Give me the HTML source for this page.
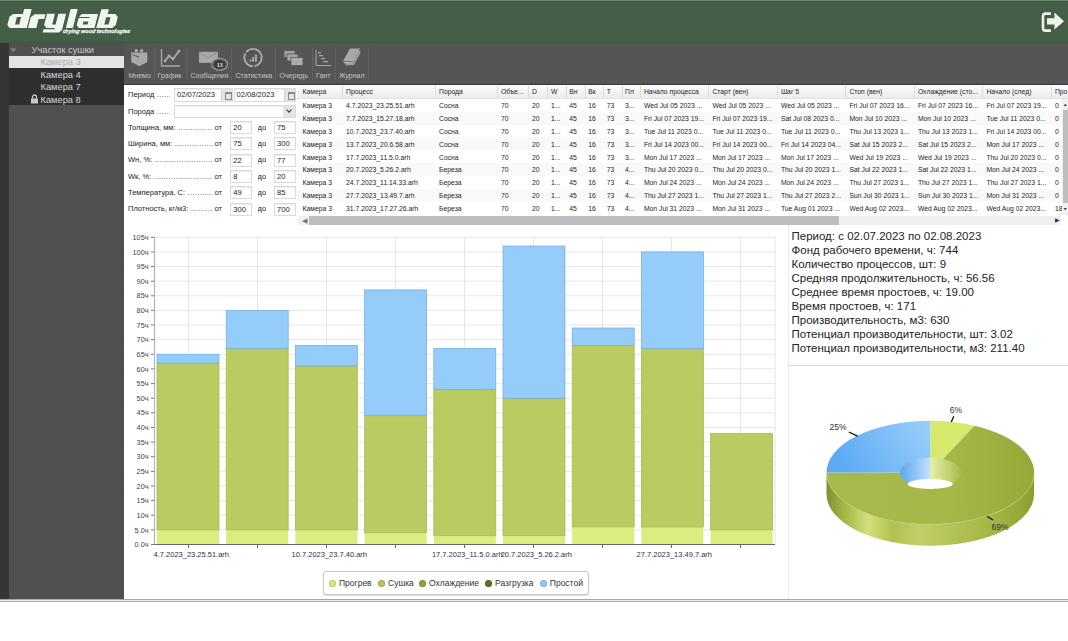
<!DOCTYPE html>
<html><head><meta charset="utf-8">
<style>
*{box-sizing:border-box;margin:0;padding:0}
html,body{width:1068px;height:641px;overflow:hidden;background:#fff;font-family:"Liberation Sans",sans-serif;position:relative}
.abs{position:absolute}
#hdr{left:0;top:0;width:1068px;height:43.5px;background:#445e47;border-top:1px solid #6d8a70;border-bottom:2px solid #3f5642;box-shadow:inset 0 1px 0 #3e5640}
#logo{left:7px;top:5.8px;color:#f2f7ee;font-weight:bold;font-style:italic;font-size:23.5px;line-height:26px;transform-origin:0 0;transform:scaleX(1.6);letter-spacing:-0.3px;-webkit-text-stroke:1.6px #f2f7ee}
#tag{left:62.5px;top:28.3px;color:#eef4ea;font-weight:bold;font-style:italic;font-size:5.45px;line-height:6px;letter-spacing:0px;-webkit-text-stroke:0.25px #eef4ea;transform:skewX(-8deg)}
#strip{left:0;top:43px;width:9px;height:556px;background:#353535}
#side{left:9px;top:43px;width:115px;height:556px;background:#505050}
#toolbar{left:124px;top:43px;width:944px;height:42px;background:#555555;border-bottom:1.5px solid #393939}
#app-bottom{left:0;top:599px;width:1068px;height:3px;border-top:1px solid #a9a9a9;border-bottom:1px solid #a9a9a9;background:#ececec}
#form{left:124px;top:85px;width:174px;height:140px;background:#fff}
#grid{left:298px;top:85px;width:770px;height:140px;background:#fff}
#chart{left:124px;top:225px;width:664px;height:374px;background:#fff}
#stats{left:788px;top:225px;width:280px;height:141px;background:#fff;border-left:1px solid #ececec;border-bottom:1px solid #d8d8d8}
#pie{left:788px;top:366px;width:280px;height:233px;background:#fff;border-left:1px solid #ececec}
.st{font-size:9.3px;line-height:12px;white-space:nowrap}
.tl{position:absolute;top:72px;font-size:7px;line-height:8px;color:#c4c4c4;white-space:nowrap}
.sep{position:absolute;top:47px;width:1px;height:33px;background:#626262}
.fl{position:absolute;font-size:7.5px;line-height:10px;color:#222;white-space:nowrap;display:flex;overflow:hidden}
.fl .dots{flex:1;overflow:hidden;letter-spacing:0.35px;margin-left:2.5px;color:#333}
.fl i{font-style:normal;margin-left:2px}
.inp{position:absolute;border:1px solid #dadada;background:#fff;box-shadow:inset 0 1px 1px #eee}
.inp span{position:absolute;top:1px;font-size:7.6px;line-height:10px;color:#1e1e1e;white-space:nowrap}
.cal{position:absolute;right:0;top:0;width:11px;height:100%;background:#e4e4e4;border-left:1px solid #d0d0d0}
.cal:after{content:"";position:absolute;left:2.5px;top:3px;width:5px;height:5px;border:1px solid #888;border-top-width:2px}
.dd{position:absolute;right:0;top:0;width:12px;height:100%;background:#e4e4e4}
.dd:after{content:"";position:absolute;left:3.5px;top:2.5px;width:3px;height:3px;border-right:1.3px solid #333;border-bottom:1.3px solid #333;transform:rotate(45deg)}
.gc{position:absolute;font-size:6.8px;line-height:9px;color:#1e1e1e;white-space:nowrap}
.yl{font-size:7.3px;fill:#444;font-family:"Liberation Sans",sans-serif}
.xl{font-size:7.5px;fill:#333;font-family:"Liberation Sans",sans-serif}
.lg{font-size:8.5px;line-height:11px;color:#333;white-space:nowrap}
.sl{font-size:11.5px;line-height:14px;color:#222;white-space:nowrap}
.pl{font-size:8.5px;fill:#333;font-family:"Liberation Sans",sans-serif}
</style></head><body>
<div id="hdr" class="abs"></div>
<svg class="abs" style="left:1036px;top:8px" width="32" height="28">
<path d="M14.9 5.6 H9.5 Q7 5.6 7 8.2 V20 Q7 22.6 9.5 22.6 H14.9" stroke="#eef4ea" stroke-width="2.6" fill="none"/>
<path d="M11 10.3 H18.4 V4.5 L28 13.2 L18.4 21.6 V16.6 H11 Z" fill="#eef4ea"/>
</svg>
<svg class="abs" style="left:0;top:0" width="140" height="42"><g transform="matrix(1 0 -0.256 1 7.168 0)"><path d="M9.40 14.00 L19.30 14.00 L19.30 9.10 L26.80 9.10 L26.80 28.00 L9.60 28.00 L6.60 25.00 L6.60 16.80 ZM14.10 17.00 L14.10 24.50 L18.30 24.50 L18.30 17.00 ZM31.00 14.20 L42.00 14.20 L42.00 18.90 L36.30 18.90 L36.30 28.00 L28.00 28.00 L28.00 17.20 ZM43.40 13.80 L51.30 13.80 L51.30 24.50 L54.70 24.50 L54.70 13.80 L62.50 13.80 L62.50 30.00 L60.10 32.40 L43.80 32.40 L43.80 29.30 L54.70 29.30 L54.70 28.00 L46.40 28.00 L43.40 25.00 ZM65.80 9.10 L72.90 9.10 L72.90 28.00 L65.80 28.00 ZM78.50 14.00 L94.50 14.00 L94.50 28.00 L78.80 28.00 L76.00 25.20 L76.00 18.10 L86.80 18.10 L86.80 17.00 L76.50 17.00 L76.50 16.00 ZM81.80 21.50 L81.80 24.50 L86.70 24.50 L86.70 21.50 ZM96.60 9.20 L104.10 9.20 L104.10 14.10 L112.00 14.10 L115.00 17.10 L115.00 25.00 L112.20 28.00 L96.20 28.00 ZM103.40 17.20 L103.40 24.50 L107.70 24.50 L107.70 17.20 Z" fill="#f1f6ee" fill-rule="evenodd"/></g></svg>
<div id="tag" class="abs">drying wood technologies</div>
<div id="strip" class="abs"></div>
<div id="side" class="abs"></div>
<div id="toolbar" class="abs"></div>
<div class="abs" style="left:9px;top:55.5px;width:115px;height:12.5px;background:#e3e3e3"></div>
<div class="abs" style="left:9px;top:68px;width:115px;height:37px;background:#2e2e2e"></div>
<svg class="abs" style="left:8px;top:46px" width="10" height="8"><path d="M1.8 2.3 L8.6 2.3 L5.2 6.2 Z" fill="#7c7c7c"/></svg>
<div class="abs st" style="left:31.5px;top:43.8px;color:#c9c9c9">Участок сушки</div>
<div class="abs st" style="left:40.5px;top:56px;color:#ababab">Камера 3</div>
<div class="abs st" style="left:40.5px;top:68.8px;color:#d6d6d6">Камера 4</div>
<div class="abs st" style="left:40.5px;top:81.2px;color:#d6d6d6">Камера 7</div>
<div class="abs st" style="left:40.5px;top:93.8px;color:#d6d6d6">Камера 8</div>
<svg class="abs" style="left:30px;top:94px" width="9" height="10"><path d="M2.5 4.5 V3 A2 2 0 0 1 6.5 3 V4.5" stroke="#c8c8c8" stroke-width="1.3" fill="none"/><rect x="1" y="4.5" width="7" height="5" fill="#c8c8c8"/></svg>

<div class="tl" style="left:128.5px">Мнемо</div>
<div class="tl" style="left:157.5px">График</div>
<div class="tl" style="left:190.5px">Сообщения</div>
<div class="tl" style="left:235.5px">Статистика</div>
<div class="tl" style="left:279.5px">Очередь</div>
<div class="tl" style="left:316px">Гант</div>
<div class="tl" style="left:339px">Журнал</div>
<div class="sep" style="left:154px"></div>
<div class="sep" style="left:186px"></div>
<div class="sep" style="left:231px"></div>
<div class="sep" style="left:275px"></div>
<div class="sep" style="left:311.5px"></div>
<div class="sep" style="left:334.5px"></div>
<div class="sep" style="left:368px"></div>
<svg class="abs" style="left:124px;top:43px" width="250" height="30">
 <g fill="#a9a9a9" stroke="none">
  <!-- mnemo box -->
  <path d="M7.2 9.4 L23.3 9.4 L23.3 19 L15.4 23.3 L7.2 19 Z"/>
  <path d="M8.5 11.6 L15 14.2" stroke="#6e6e6e" stroke-width="1.3" fill="none"/>
  <circle cx="12.3" cy="7.6" r="1.7"/><circle cx="17.6" cy="7.6" r="1.7"/>
  <!-- grafik -->
  <path d="M37.5 6 V23 H56" stroke="#a9a9a9" stroke-width="1.3" fill="none"/>
  <path d="M41 18 L45 13 L49 16 L55 8" stroke="#a9a9a9" stroke-width="2" fill="none" stroke-linejoin="round"/>
  <circle cx="41" cy="18" r="1.4"/><circle cx="45" cy="13" r="1.4"/><circle cx="49" cy="16" r="1.4"/><circle cx="55" cy="8" r="1.4"/>
  <!-- envelope -->
  <rect x="75" y="8.8" width="19" height="11" fill="#a9a9a9"/>
  <path d="M75 9 L84.5 15 L94 9" stroke="#8c8c8c" stroke-width="0.8" fill="none"/>
  <ellipse cx="95.7" cy="21.3" rx="8" ry="6" fill="#555" stroke="#9a9a9a" stroke-width="1.2"/>
  <ellipse cx="95.7" cy="21.3" rx="5.5" ry="4" fill="#3b3b3b"/>
  <text x="95.7" y="23.5" font-family="Liberation Serif" font-weight="bold" font-size="6" fill="#eee" text-anchor="middle">13</text>
  <!-- stat ring -->
  <circle cx="129" cy="14.6" r="8.7" stroke="#a9a9a9" stroke-width="1.9" fill="none" stroke-dasharray="12 1.5 18 1.5 22 1.5"/>
  <rect x="125.5" y="16.5" width="2" height="2.2"/><rect x="128.2" y="14" width="2" height="4.7"/><rect x="130.9" y="11.5" width="2" height="7.2"/>
  <!-- queue -->
  <rect x="160" y="7.5" width="11" height="7" fill="#a0a0a0" stroke="#555" stroke-width="0.8"/>
  <rect x="163" y="11" width="11" height="7" fill="#a6a6a6" stroke="#555" stroke-width="0.8"/>
  <rect x="167" y="14.5" width="12" height="8" fill="#acacac" stroke="#555" stroke-width="0.8"/>
  <!-- gantt -->
  <path d="M192 7 V22.5 H207" stroke="#a9a9a9" stroke-width="1" fill="none"/>
  <rect x="194" y="9" width="3" height="1.2"/><rect x="195" y="12" width="4" height="1.2"/><rect x="197" y="15" width="4" height="1.2"/><rect x="199" y="18" width="5" height="1.2"/>
  <!-- book -->
  <path d="M219 18 L226 5.5 L236 5.5 L229 18.5 Z"/>
  <path d="M219 18.5 L222 22.5 L230 22 L236.5 10 L236 7 L229.5 19.5 Z" fill="#9a9a9a"/>
  <path d="M221 19.5 L228.5 20 L235.5 8" stroke="#ddd" stroke-width="0.6" fill="none"/>
 </g>
</svg>

<div id="form" class="abs"></div>

<div class="fl" style="left:128px;top:90.3px;width:42px">Период<span class="dots">..........................</span></div>
<div class="fl" style="left:128px;top:106.5px;width:42px">Порода<span class="dots">..........................</span></div>
<div class="inp" style="left:174px;top:88px;width:59px;height:13.5px"><span style="left:2px">02/07/2023</span><b class="cal"></b></div>
<div class="inp" style="left:233.5px;top:88px;width:62.5px;height:13.5px"><span style="left:2px">02/08/2023</span><b class="cal"></b></div>
<div class="inp" style="left:174px;top:104.5px;width:122px;height:13px"><b class="dd"></b></div>
<div class="fl" style="left:128px;top:122.6px;width:94px">Толщина, мм:<span class="dots">......................................................</span><i>от</i></div>
<div class="inp" style="left:230.3px;top:121.0px;width:22px;height:13px"><span style="left:2px">20</span></div>
<div class="fl" style="left:257.5px;top:122.6px">до</div>
<div class="inp" style="left:274px;top:121.0px;width:22px;height:13px"><span style="left:2px">75</span></div>
<div class="fl" style="left:128px;top:139.0px;width:94px">Ширина, мм:<span class="dots">......................................................</span><i>от</i></div>
<div class="inp" style="left:230.3px;top:137.4px;width:22px;height:13px"><span style="left:2px">75</span></div>
<div class="fl" style="left:257.5px;top:139.0px">до</div>
<div class="inp" style="left:274px;top:137.4px;width:22px;height:13px"><span style="left:2px">300</span></div>
<div class="fl" style="left:128px;top:155.4px;width:94px">Wн, %:<span class="dots">......................................................</span><i>от</i></div>
<div class="inp" style="left:230.3px;top:153.8px;width:22px;height:13px"><span style="left:2px">22</span></div>
<div class="fl" style="left:257.5px;top:155.4px">до</div>
<div class="inp" style="left:274px;top:153.8px;width:22px;height:13px"><span style="left:2px">77</span></div>
<div class="fl" style="left:128px;top:171.7px;width:94px">Wк, %:<span class="dots">......................................................</span><i>от</i></div>
<div class="inp" style="left:230.3px;top:170.1px;width:22px;height:13px"><span style="left:2px">8</span></div>
<div class="fl" style="left:257.5px;top:171.7px">до</div>
<div class="inp" style="left:274px;top:170.1px;width:22px;height:13px"><span style="left:2px">20</span></div>
<div class="fl" style="left:128px;top:188.0px;width:94px">Температура, С:<span class="dots">......................................................</span><i>от</i></div>
<div class="inp" style="left:230.3px;top:186.4px;width:22px;height:13px"><span style="left:2px">49</span></div>
<div class="fl" style="left:257.5px;top:188.0px">до</div>
<div class="inp" style="left:274px;top:186.4px;width:22px;height:13px"><span style="left:2px">85</span></div>
<div class="fl" style="left:128px;top:204.3px;width:94px">Плотность, кг/м3:<span class="dots">......................................................</span><i>от</i></div>
<div class="inp" style="left:230.3px;top:202.7px;width:22px;height:13px"><span style="left:2px">300</span></div>
<div class="fl" style="left:257.5px;top:204.3px">до</div>
<div class="inp" style="left:274px;top:202.7px;width:22px;height:13px"><span style="left:2px">700</span></div>
<div class="abs" style="left:297px;top:85px;width:771px;height:140px;background:#fff;overflow:hidden">
<div class="abs" style="left:0;top:0;width:771px;height:14px;background:linear-gradient(#fbfbfb,#ececec);border-bottom:1px solid #e2e2e2"></div>
<div class="gc" style="left:5.5px;top:2px;width:41.4px">Камера</div>
<div class="abs" style="left:44.9px;top:1px;width:1px;height:12px;background:#dcdcdc"></div><div class="gc" style="left:49.1px;top:2px;width:88.9px">Процесс</div>
<div class="abs" style="left:137.8px;top:1px;width:1px;height:12px;background:#dcdcdc"></div><div class="gc" style="left:142.0px;top:2px;width:57.9px">Порода</div>
<div class="abs" style="left:199.7px;top:1px;width:1px;height:12px;background:#dcdcdc"></div><div class="gc" style="left:203.9px;top:2px;width:27.0px">Объе...</div>
<div class="abs" style="left:230.7px;top:1px;width:1px;height:12px;background:#dcdcdc"></div><div class="gc" style="left:234.9px;top:2px;width:15.1px">D</div>
<div class="abs" style="left:249.8px;top:1px;width:1px;height:12px;background:#dcdcdc"></div><div class="gc" style="left:254.0px;top:2px;width:15.1px">W</div>
<div class="abs" style="left:268.9px;top:1px;width:1px;height:12px;background:#dcdcdc"></div><div class="gc" style="left:272.2px;top:2px;width:15.1px">Вн</div>
<div class="abs" style="left:288.0px;top:1px;width:1px;height:12px;background:#dcdcdc"></div><div class="gc" style="left:291.3px;top:2px;width:14.4px">Вк</div>
<div class="abs" style="left:306.4px;top:1px;width:1px;height:12px;background:#dcdcdc"></div><div class="gc" style="left:309.7px;top:2px;width:14.3px">T</div>
<div class="abs" style="left:324.7px;top:1px;width:1px;height:12px;background:#dcdcdc"></div><div class="gc" style="left:328.0px;top:2px;width:13.8px">Пл</div>
<div class="abs" style="left:342.5px;top:1px;width:1px;height:12px;background:#dcdcdc"></div><div class="gc" style="left:346.9px;top:2px;width:64.5px">Начало процесса</div>
<div class="abs" style="left:411.0px;top:1px;width:1px;height:12px;background:#dcdcdc"></div><div class="gc" style="left:415.4px;top:2px;width:64.5px">Старт (вен)</div>
<div class="abs" style="left:479.5px;top:1px;width:1px;height:12px;background:#dcdcdc"></div><div class="gc" style="left:483.9px;top:2px;width:64.5px">Шаг 5</div>
<div class="abs" style="left:548.0px;top:1px;width:1px;height:12px;background:#dcdcdc"></div><div class="gc" style="left:552.4px;top:2px;width:64.5px">Стоп (вен)</div>
<div class="abs" style="left:616.5px;top:1px;width:1px;height:12px;background:#dcdcdc"></div><div class="gc" style="left:620.9px;top:2px;width:64.5px">Охлаждение (сто...</div>
<div class="abs" style="left:685.0px;top:1px;width:1px;height:12px;background:#dcdcdc"></div><div class="gc" style="left:689.4px;top:2px;width:64.5px">Начало (след)</div>
<div class="abs" style="left:753.5px;top:1px;width:1px;height:12px;background:#dcdcdc"></div><div class="gc" style="left:757.9px;top:2px;width:45.0px">Про</div>
<div class="gc" style="left:5.5px;top:16.3px">Камера 3</div><div class="gc" style="left:49.1px;top:16.3px">4.7.2023_23.25.51.arh</div><div class="gc" style="left:142.0px;top:16.3px">Сосна</div><div class="gc" style="left:203.9px;top:16.3px">70</div><div class="gc" style="left:234.9px;top:16.3px">20</div><div class="gc" style="left:254.0px;top:16.3px">1...</div><div class="gc" style="left:272.2px;top:16.3px">45</div><div class="gc" style="left:291.3px;top:16.3px">16</div><div class="gc" style="left:309.7px;top:16.3px">73</div><div class="gc" style="left:328.0px;top:16.3px">3...</div><div class="gc" style="left:346.9px;top:16.3px">Wed Jul 05 2023 ...</div><div class="gc" style="left:415.4px;top:16.3px">Wed Jul 05 2023 ...</div><div class="gc" style="left:483.9px;top:16.3px">Wed Jul 05 2023 ...</div><div class="gc" style="left:552.4px;top:16.3px">Fri Jul 07 2023 16...</div><div class="gc" style="left:620.9px;top:16.3px">Fri Jul 07 2023 16...</div><div class="gc" style="left:689.4px;top:16.3px">Fri Jul 07 2023 19...</div><div class="gc" style="left:757.9px;top:16.3px">0</div>
<div class="abs" style="left:0;top:26.8px;width:771px;height:12.8px;background:#f9f9f9"></div><div class="gc" style="left:5.5px;top:29.1px">Камера 3</div><div class="gc" style="left:49.1px;top:29.1px">7.7.2023_15.27.18.arh</div><div class="gc" style="left:142.0px;top:29.1px">Сосна</div><div class="gc" style="left:203.9px;top:29.1px">70</div><div class="gc" style="left:234.9px;top:29.1px">20</div><div class="gc" style="left:254.0px;top:29.1px">1...</div><div class="gc" style="left:272.2px;top:29.1px">45</div><div class="gc" style="left:291.3px;top:29.1px">16</div><div class="gc" style="left:309.7px;top:29.1px">73</div><div class="gc" style="left:328.0px;top:29.1px">3...</div><div class="gc" style="left:346.9px;top:29.1px">Fri Jul 07 2023 19...</div><div class="gc" style="left:415.4px;top:29.1px">Fri Jul 07 2023 19...</div><div class="gc" style="left:483.9px;top:29.1px">Sat Jul 08 2023 0...</div><div class="gc" style="left:552.4px;top:29.1px">Mon Jul 10 2023 ...</div><div class="gc" style="left:620.9px;top:29.1px">Mon Jul 10 2023 ...</div><div class="gc" style="left:689.4px;top:29.1px">Tue Jul 11 2023 0...</div><div class="gc" style="left:757.9px;top:29.1px">0</div>
<div class="gc" style="left:5.5px;top:41.9px">Камера 3</div><div class="gc" style="left:49.1px;top:41.9px">10.7.2023_23.7.40.arh</div><div class="gc" style="left:142.0px;top:41.9px">Сосна</div><div class="gc" style="left:203.9px;top:41.9px">70</div><div class="gc" style="left:234.9px;top:41.9px">20</div><div class="gc" style="left:254.0px;top:41.9px">1...</div><div class="gc" style="left:272.2px;top:41.9px">45</div><div class="gc" style="left:291.3px;top:41.9px">16</div><div class="gc" style="left:309.7px;top:41.9px">73</div><div class="gc" style="left:328.0px;top:41.9px">3...</div><div class="gc" style="left:346.9px;top:41.9px">Tue Jul 11 2023 0...</div><div class="gc" style="left:415.4px;top:41.9px">Tue Jul 11 2023 0...</div><div class="gc" style="left:483.9px;top:41.9px">Tue Jul 11 2023 0...</div><div class="gc" style="left:552.4px;top:41.9px">Thu Jul 13 2023 1...</div><div class="gc" style="left:620.9px;top:41.9px">Thu Jul 13 2023 1...</div><div class="gc" style="left:689.4px;top:41.9px">Fri Jul 14 2023 00...</div><div class="gc" style="left:757.9px;top:41.9px">0</div>
<div class="abs" style="left:0;top:52.4px;width:771px;height:12.8px;background:#f9f9f9"></div><div class="gc" style="left:5.5px;top:54.7px">Камера 3</div><div class="gc" style="left:49.1px;top:54.7px">13.7.2023_20.6.58.arh</div><div class="gc" style="left:142.0px;top:54.7px">Сосна</div><div class="gc" style="left:203.9px;top:54.7px">70</div><div class="gc" style="left:234.9px;top:54.7px">20</div><div class="gc" style="left:254.0px;top:54.7px">1...</div><div class="gc" style="left:272.2px;top:54.7px">45</div><div class="gc" style="left:291.3px;top:54.7px">16</div><div class="gc" style="left:309.7px;top:54.7px">73</div><div class="gc" style="left:328.0px;top:54.7px">3...</div><div class="gc" style="left:346.9px;top:54.7px">Fri Jul 14 2023 00...</div><div class="gc" style="left:415.4px;top:54.7px">Fri Jul 14 2023 00...</div><div class="gc" style="left:483.9px;top:54.7px">Fri Jul 14 2023 04...</div><div class="gc" style="left:552.4px;top:54.7px">Sat Jul 15 2023 2...</div><div class="gc" style="left:620.9px;top:54.7px">Sat Jul 15 2023 2...</div><div class="gc" style="left:689.4px;top:54.7px">Mon Jul 17 2023 ...</div><div class="gc" style="left:757.9px;top:54.7px">0</div>
<div class="gc" style="left:5.5px;top:67.5px">Камера 3</div><div class="gc" style="left:49.1px;top:67.5px">17.7.2023_11.5.0.arh</div><div class="gc" style="left:142.0px;top:67.5px">Сосна</div><div class="gc" style="left:203.9px;top:67.5px">70</div><div class="gc" style="left:234.9px;top:67.5px">20</div><div class="gc" style="left:254.0px;top:67.5px">1...</div><div class="gc" style="left:272.2px;top:67.5px">45</div><div class="gc" style="left:291.3px;top:67.5px">16</div><div class="gc" style="left:309.7px;top:67.5px">73</div><div class="gc" style="left:328.0px;top:67.5px">3...</div><div class="gc" style="left:346.9px;top:67.5px">Mon Jul 17 2023 ...</div><div class="gc" style="left:415.4px;top:67.5px">Mon Jul 17 2023 ...</div><div class="gc" style="left:483.9px;top:67.5px">Mon Jul 17 2023 ...</div><div class="gc" style="left:552.4px;top:67.5px">Wed Jul 19 2023 ...</div><div class="gc" style="left:620.9px;top:67.5px">Wed Jul 19 2023 ...</div><div class="gc" style="left:689.4px;top:67.5px">Thu Jul 20 2023 0...</div><div class="gc" style="left:757.9px;top:67.5px">0</div>
<div class="abs" style="left:0;top:78.0px;width:771px;height:12.8px;background:#f9f9f9"></div><div class="gc" style="left:5.5px;top:80.3px">Камера 3</div><div class="gc" style="left:49.1px;top:80.3px">20.7.2023_5.26.2.arh</div><div class="gc" style="left:142.0px;top:80.3px">Береза</div><div class="gc" style="left:203.9px;top:80.3px">70</div><div class="gc" style="left:234.9px;top:80.3px">20</div><div class="gc" style="left:254.0px;top:80.3px">1...</div><div class="gc" style="left:272.2px;top:80.3px">45</div><div class="gc" style="left:291.3px;top:80.3px">16</div><div class="gc" style="left:309.7px;top:80.3px">73</div><div class="gc" style="left:328.0px;top:80.3px">4...</div><div class="gc" style="left:346.9px;top:80.3px">Thu Jul 20 2023 0...</div><div class="gc" style="left:415.4px;top:80.3px">Thu Jul 20 2023 0...</div><div class="gc" style="left:483.9px;top:80.3px">Thu Jul 20 2023 1...</div><div class="gc" style="left:552.4px;top:80.3px">Sat Jul 22 2023 1...</div><div class="gc" style="left:620.9px;top:80.3px">Sat Jul 22 2023 1...</div><div class="gc" style="left:689.4px;top:80.3px">Mon Jul 24 2023 ...</div><div class="gc" style="left:757.9px;top:80.3px">0</div>
<div class="gc" style="left:5.5px;top:93.1px">Камера 3</div><div class="gc" style="left:49.1px;top:93.1px">24.7.2023_11.14.33.arh</div><div class="gc" style="left:142.0px;top:93.1px">Береза</div><div class="gc" style="left:203.9px;top:93.1px">70</div><div class="gc" style="left:234.9px;top:93.1px">20</div><div class="gc" style="left:254.0px;top:93.1px">1...</div><div class="gc" style="left:272.2px;top:93.1px">45</div><div class="gc" style="left:291.3px;top:93.1px">16</div><div class="gc" style="left:309.7px;top:93.1px">73</div><div class="gc" style="left:328.0px;top:93.1px">4...</div><div class="gc" style="left:346.9px;top:93.1px">Mon Jul 24 2023 ...</div><div class="gc" style="left:415.4px;top:93.1px">Mon Jul 24 2023 ...</div><div class="gc" style="left:483.9px;top:93.1px">Mon Jul 24 2023 ...</div><div class="gc" style="left:552.4px;top:93.1px">Thu Jul 27 2023 1...</div><div class="gc" style="left:620.9px;top:93.1px">Thu Jul 27 2023 1...</div><div class="gc" style="left:689.4px;top:93.1px">Thu Jul 27 2023 1...</div><div class="gc" style="left:757.9px;top:93.1px">0</div>
<div class="abs" style="left:0;top:103.6px;width:771px;height:12.8px;background:#f9f9f9"></div><div class="gc" style="left:5.5px;top:105.9px">Камера 3</div><div class="gc" style="left:49.1px;top:105.9px">27.7.2023_13.49.7.arh</div><div class="gc" style="left:142.0px;top:105.9px">Береза</div><div class="gc" style="left:203.9px;top:105.9px">70</div><div class="gc" style="left:234.9px;top:105.9px">20</div><div class="gc" style="left:254.0px;top:105.9px">1...</div><div class="gc" style="left:272.2px;top:105.9px">45</div><div class="gc" style="left:291.3px;top:105.9px">16</div><div class="gc" style="left:309.7px;top:105.9px">73</div><div class="gc" style="left:328.0px;top:105.9px">4...</div><div class="gc" style="left:346.9px;top:105.9px">Thu Jul 27 2023 1...</div><div class="gc" style="left:415.4px;top:105.9px">Thu Jul 27 2023 1...</div><div class="gc" style="left:483.9px;top:105.9px">Thu Jul 27 2023 2...</div><div class="gc" style="left:552.4px;top:105.9px">Sun Jul 30 2023 1...</div><div class="gc" style="left:620.9px;top:105.9px">Sun Jul 30 2023 1...</div><div class="gc" style="left:689.4px;top:105.9px">Mon Jul 31 2023 ...</div><div class="gc" style="left:757.9px;top:105.9px">0</div>
<div class="gc" style="left:5.5px;top:118.7px">Камера 3</div><div class="gc" style="left:49.1px;top:118.7px">31.7.2023_17.27.26.arh</div><div class="gc" style="left:142.0px;top:118.7px">Береза</div><div class="gc" style="left:203.9px;top:118.7px">70</div><div class="gc" style="left:234.9px;top:118.7px">20</div><div class="gc" style="left:254.0px;top:118.7px">1...</div><div class="gc" style="left:272.2px;top:118.7px">45</div><div class="gc" style="left:291.3px;top:118.7px">16</div><div class="gc" style="left:309.7px;top:118.7px">73</div><div class="gc" style="left:328.0px;top:118.7px">4...</div><div class="gc" style="left:346.9px;top:118.7px">Mon Jul 31 2023 ...</div><div class="gc" style="left:415.4px;top:118.7px">Mon Jul 31 2023 ...</div><div class="gc" style="left:483.9px;top:118.7px">Tue Aug 01 2023 ...</div><div class="gc" style="left:552.4px;top:118.7px">Wed Aug 02 2023...</div><div class="gc" style="left:620.9px;top:118.7px">Wed Aug 02 2023...</div><div class="gc" style="left:689.4px;top:118.7px">Wed Aug 02 2023...</div><div class="gc" style="left:757.9px;top:118.7px">18</div>
</div>
<div class="abs" style="left:298px;top:215.5px;width:763px;height:9px;background:#f0f0f0"></div><div class="abs" style="left:309px;top:216px;width:530px;height:8.5px;background:#bdbdbd"></div><div class="abs" style="left:302px;top:217px;font-size:7px;line-height:7px;color:#777">&#9664;</div><div class="abs" style="left:1055px;top:217px;font-size:6px;line-height:7px;color:#333">&#9654;</div><div class="abs" style="left:1061.8px;top:99px;width:6.2px;height:116px;background:#f0f0f0"></div><div class="abs" style="left:1062.5px;top:110px;width:5.5px;height:93px;background:#bdbdbd"></div><svg class="abs" style="left:1062px;top:100px" width="6" height="115"><path d="M1.5 6 L5 6 L3.2 3.8 Z" fill="#444"/><path d="M1.5 108 L5 108 L3.2 110.2 Z" fill="#444"/></svg>
<div id="chart" class="abs"></div>
<svg class="abs" style="left:0;top:0" width="1068" height="641">
<line x1="151" y1="544.5" x2="154.5" y2="544.5" stroke="#777" stroke-width="1"/><text x="148.5" y="547.1" class="yl" text-anchor="end">0.0ч</text>
<line x1="154.5" y1="529.9" x2="775" y2="529.9" stroke="#e6e6e6" stroke-width="1"/><line x1="151" y1="529.9" x2="154.5" y2="529.9" stroke="#777" stroke-width="1"/><text x="148.5" y="532.5" class="yl" text-anchor="end">5.0ч</text>
<line x1="154.5" y1="515.2" x2="775" y2="515.2" stroke="#e6e6e6" stroke-width="1"/><line x1="151" y1="515.2" x2="154.5" y2="515.2" stroke="#777" stroke-width="1"/><text x="148.5" y="517.8" class="yl" text-anchor="end">10ч</text>
<line x1="154.5" y1="500.6" x2="775" y2="500.6" stroke="#e6e6e6" stroke-width="1"/><line x1="151" y1="500.6" x2="154.5" y2="500.6" stroke="#777" stroke-width="1"/><text x="148.5" y="503.2" class="yl" text-anchor="end">15ч</text>
<line x1="154.5" y1="486.0" x2="775" y2="486.0" stroke="#e6e6e6" stroke-width="1"/><line x1="151" y1="486.0" x2="154.5" y2="486.0" stroke="#777" stroke-width="1"/><text x="148.5" y="488.6" class="yl" text-anchor="end">20ч</text>
<line x1="154.5" y1="471.4" x2="775" y2="471.4" stroke="#e6e6e6" stroke-width="1"/><line x1="151" y1="471.4" x2="154.5" y2="471.4" stroke="#777" stroke-width="1"/><text x="148.5" y="474.0" class="yl" text-anchor="end">25ч</text>
<line x1="154.5" y1="456.7" x2="775" y2="456.7" stroke="#e6e6e6" stroke-width="1"/><line x1="151" y1="456.7" x2="154.5" y2="456.7" stroke="#777" stroke-width="1"/><text x="148.5" y="459.3" class="yl" text-anchor="end">30ч</text>
<line x1="154.5" y1="442.1" x2="775" y2="442.1" stroke="#e6e6e6" stroke-width="1"/><line x1="151" y1="442.1" x2="154.5" y2="442.1" stroke="#777" stroke-width="1"/><text x="148.5" y="444.7" class="yl" text-anchor="end">35ч</text>
<line x1="154.5" y1="427.5" x2="775" y2="427.5" stroke="#e6e6e6" stroke-width="1"/><line x1="151" y1="427.5" x2="154.5" y2="427.5" stroke="#777" stroke-width="1"/><text x="148.5" y="430.1" class="yl" text-anchor="end">40ч</text>
<line x1="154.5" y1="412.8" x2="775" y2="412.8" stroke="#e6e6e6" stroke-width="1"/><line x1="151" y1="412.8" x2="154.5" y2="412.8" stroke="#777" stroke-width="1"/><text x="148.5" y="415.4" class="yl" text-anchor="end">45ч</text>
<line x1="154.5" y1="398.2" x2="775" y2="398.2" stroke="#e6e6e6" stroke-width="1"/><line x1="151" y1="398.2" x2="154.5" y2="398.2" stroke="#777" stroke-width="1"/><text x="148.5" y="400.8" class="yl" text-anchor="end">50ч</text>
<line x1="154.5" y1="383.6" x2="775" y2="383.6" stroke="#e6e6e6" stroke-width="1"/><line x1="151" y1="383.6" x2="154.5" y2="383.6" stroke="#777" stroke-width="1"/><text x="148.5" y="386.2" class="yl" text-anchor="end">55ч</text>
<line x1="154.5" y1="368.9" x2="775" y2="368.9" stroke="#e6e6e6" stroke-width="1"/><line x1="151" y1="368.9" x2="154.5" y2="368.9" stroke="#777" stroke-width="1"/><text x="148.5" y="371.5" class="yl" text-anchor="end">60ч</text>
<line x1="154.5" y1="354.3" x2="775" y2="354.3" stroke="#e6e6e6" stroke-width="1"/><line x1="151" y1="354.3" x2="154.5" y2="354.3" stroke="#777" stroke-width="1"/><text x="148.5" y="356.9" class="yl" text-anchor="end">65ч</text>
<line x1="154.5" y1="339.7" x2="775" y2="339.7" stroke="#e6e6e6" stroke-width="1"/><line x1="151" y1="339.7" x2="154.5" y2="339.7" stroke="#777" stroke-width="1"/><text x="148.5" y="342.3" class="yl" text-anchor="end">70ч</text>
<line x1="154.5" y1="325.0" x2="775" y2="325.0" stroke="#e6e6e6" stroke-width="1"/><line x1="151" y1="325.0" x2="154.5" y2="325.0" stroke="#777" stroke-width="1"/><text x="148.5" y="327.6" class="yl" text-anchor="end">75ч</text>
<line x1="154.5" y1="310.4" x2="775" y2="310.4" stroke="#e6e6e6" stroke-width="1"/><line x1="151" y1="310.4" x2="154.5" y2="310.4" stroke="#777" stroke-width="1"/><text x="148.5" y="313.0" class="yl" text-anchor="end">80ч</text>
<line x1="154.5" y1="295.8" x2="775" y2="295.8" stroke="#e6e6e6" stroke-width="1"/><line x1="151" y1="295.8" x2="154.5" y2="295.8" stroke="#777" stroke-width="1"/><text x="148.5" y="298.4" class="yl" text-anchor="end">85ч</text>
<line x1="154.5" y1="281.2" x2="775" y2="281.2" stroke="#e6e6e6" stroke-width="1"/><line x1="151" y1="281.2" x2="154.5" y2="281.2" stroke="#777" stroke-width="1"/><text x="148.5" y="283.8" class="yl" text-anchor="end">90ч</text>
<line x1="154.5" y1="266.5" x2="775" y2="266.5" stroke="#e6e6e6" stroke-width="1"/><line x1="151" y1="266.5" x2="154.5" y2="266.5" stroke="#777" stroke-width="1"/><text x="148.5" y="269.1" class="yl" text-anchor="end">95ч</text>
<line x1="154.5" y1="251.9" x2="775" y2="251.9" stroke="#e6e6e6" stroke-width="1"/><line x1="151" y1="251.9" x2="154.5" y2="251.9" stroke="#777" stroke-width="1"/><text x="148.5" y="254.5" class="yl" text-anchor="end">100ч</text>
<line x1="154.5" y1="237.3" x2="775" y2="237.3" stroke="#e6e6e6" stroke-width="1"/><line x1="151" y1="237.3" x2="154.5" y2="237.3" stroke="#777" stroke-width="1"/><text x="148.5" y="239.9" class="yl" text-anchor="end">105ч</text>
<line x1="188.5" y1="237" x2="188.5" y2="544.5" stroke="#e6e6e6" stroke-width="1"/><line x1="257.5" y1="237" x2="257.5" y2="544.5" stroke="#e6e6e6" stroke-width="1"/><line x1="326.5" y1="237" x2="326.5" y2="544.5" stroke="#e6e6e6" stroke-width="1"/><line x1="395.5" y1="237" x2="395.5" y2="544.5" stroke="#e6e6e6" stroke-width="1"/><line x1="464.5" y1="237" x2="464.5" y2="544.5" stroke="#e6e6e6" stroke-width="1"/><line x1="533.5" y1="237" x2="533.5" y2="544.5" stroke="#e6e6e6" stroke-width="1"/><line x1="602.5" y1="237" x2="602.5" y2="544.5" stroke="#e6e6e6" stroke-width="1"/><line x1="671.5" y1="237" x2="671.5" y2="544.5" stroke="#e6e6e6" stroke-width="1"/><line x1="740.5" y1="237" x2="740.5" y2="544.5" stroke="#e6e6e6" stroke-width="1"/><line x1="775" y1="237" x2="775" y2="544.5" stroke="#e6e6e6" stroke-width="1"/><rect x="157.0" y="529.9" width="62" height="14.6" fill="#dbed7e"/><rect x="157.0" y="363.1" width="62" height="166.8" fill="#bacb61" stroke="#a5b650" stroke-width="0.7"/><rect x="157.0" y="354.3" width="62" height="8.8" fill="#94cdfa" stroke="#6fa9e0" stroke-width="0.7"/>
<rect x="226.2" y="529.9" width="62" height="14.6" fill="#dbed7e"/><rect x="226.2" y="348.5" width="62" height="181.4" fill="#bacb61" stroke="#a5b650" stroke-width="0.7"/><rect x="226.2" y="310.4" width="62" height="38.0" fill="#94cdfa" stroke="#6fa9e0" stroke-width="0.7"/>
<rect x="295.4" y="529.9" width="62" height="14.6" fill="#dbed7e"/><rect x="295.4" y="366.0" width="62" height="163.9" fill="#bacb61" stroke="#a5b650" stroke-width="0.7"/><rect x="295.4" y="345.5" width="62" height="20.5" fill="#94cdfa" stroke="#6fa9e0" stroke-width="0.7"/>
<rect x="364.6" y="532.8" width="62" height="11.7" fill="#dbed7e"/><rect x="364.6" y="415.8" width="62" height="117.0" fill="#bacb61" stroke="#a5b650" stroke-width="0.7"/><rect x="364.6" y="289.9" width="62" height="125.8" fill="#94cdfa" stroke="#6fa9e0" stroke-width="0.7"/>
<rect x="433.8" y="535.7" width="62" height="8.8" fill="#dbed7e"/><rect x="433.8" y="389.4" width="62" height="146.3" fill="#bacb61" stroke="#a5b650" stroke-width="0.7"/><rect x="433.8" y="348.5" width="62" height="41.0" fill="#94cdfa" stroke="#6fa9e0" stroke-width="0.7"/>
<rect x="503.0" y="535.7" width="62" height="8.8" fill="#dbed7e"/><rect x="503.0" y="398.2" width="62" height="137.5" fill="#bacb61" stroke="#a5b650" stroke-width="0.7"/><rect x="503.0" y="246.0" width="62" height="152.2" fill="#94cdfa" stroke="#6fa9e0" stroke-width="0.7"/>
<rect x="572.2" y="526.9" width="62" height="17.6" fill="#dbed7e"/><rect x="572.2" y="345.5" width="62" height="181.4" fill="#bacb61" stroke="#a5b650" stroke-width="0.7"/><rect x="572.2" y="328.0" width="62" height="17.6" fill="#94cdfa" stroke="#6fa9e0" stroke-width="0.7"/>
<rect x="641.4" y="526.9" width="62" height="17.6" fill="#dbed7e"/><rect x="641.4" y="348.5" width="62" height="178.5" fill="#bacb61" stroke="#a5b650" stroke-width="0.7"/><rect x="641.4" y="251.9" width="62" height="96.6" fill="#94cdfa" stroke="#6fa9e0" stroke-width="0.7"/>
<rect x="710.6" y="529.9" width="62" height="14.6" fill="#dbed7e"/><rect x="710.6" y="433.3" width="62" height="96.6" fill="#bacb61" stroke="#a5b650" stroke-width="0.7"/>
<line x1="154.5" y1="237" x2="154.5" y2="544.5" stroke="#b4b4b4" stroke-width="1.2"/><line x1="154.5" y1="544.5" x2="775" y2="544.5" stroke="#666" stroke-width="1"/><line x1="188.5" y1="544.5" x2="188.5" y2="548.0" stroke="#666" stroke-width="1"/><line x1="257.5" y1="544.5" x2="257.5" y2="548.0" stroke="#666" stroke-width="1"/><line x1="326.5" y1="544.5" x2="326.5" y2="548.0" stroke="#666" stroke-width="1"/><line x1="395.5" y1="544.5" x2="395.5" y2="548.0" stroke="#666" stroke-width="1"/><line x1="464.5" y1="544.5" x2="464.5" y2="548.0" stroke="#666" stroke-width="1"/><line x1="533.5" y1="544.5" x2="533.5" y2="548.0" stroke="#666" stroke-width="1"/><line x1="602.5" y1="544.5" x2="602.5" y2="548.0" stroke="#666" stroke-width="1"/><line x1="671.5" y1="544.5" x2="671.5" y2="548.0" stroke="#666" stroke-width="1"/><line x1="740.5" y1="544.5" x2="740.5" y2="548.0" stroke="#666" stroke-width="1"/><text x="191.3" y="556.7" class="xl" text-anchor="middle">4.7.2023_23.25.51.arh</text><text x="329.3" y="556.7" class="xl" text-anchor="middle">10.7.2023_23.7.40.arh</text><text x="467.3" y="556.7" class="xl" text-anchor="middle">17.7.2023_11.5.0.arh</text><text x="536.3" y="556.7" class="xl" text-anchor="middle">20.7.2023_5.26.2.arh</text><text x="674.3" y="556.7" class="xl" text-anchor="middle">27.7.2023_13.49.7.arh</text></svg>
<div class="abs" style="left:323px;top:571px;width:266px;height:24px;border:1px solid #c8c8c8;border-radius:3px;background:#fff;box-shadow:0 1px 1px #ddd"></div><div class="abs" style="left:329.2px;top:579.7px;width:7px;height:7px;border-radius:50%;background:#d6e97a;border:0.5px solid rgba(0,0,0,0.15)"></div><div class="abs lg" style="left:339.0px;top:578px">Прогрев</div><div class="abs" style="left:378.3px;top:579.7px;width:7px;height:7px;border-radius:50%;background:#b6c75c;border:0.5px solid rgba(0,0,0,0.15)"></div><div class="abs lg" style="left:388.0px;top:578px">Сушка</div><div class="abs" style="left:419.0px;top:579.7px;width:7px;height:7px;border-radius:50%;background:#8ea53e;border:0.5px solid rgba(0,0,0,0.15)"></div><div class="abs lg" style="left:429.0px;top:578px">Охлаждение</div><div class="abs" style="left:485.0px;top:579.7px;width:7px;height:7px;border-radius:50%;background:#5d6e2a;border:0.5px solid rgba(0,0,0,0.15)"></div><div class="abs lg" style="left:495.0px;top:578px">Разгрузка</div><div class="abs" style="left:539.8px;top:579.7px;width:7px;height:7px;border-radius:50%;background:#90cbf9;border:0.5px solid rgba(0,0,0,0.15)"></div><div class="abs lg" style="left:549.8px;top:578px">Простой</div>
<div id="stats" class="abs"></div>
<div id="pie" class="abs"></div>
<div class="abs sl" style="left:791.5px;top:229.1px">Период: с 02.07.2023 по 02.08.2023</div>
<div class="abs sl" style="left:791.5px;top:243.1px">Фонд рабочего времени, ч: 744</div>
<div class="abs sl" style="left:791.5px;top:257.2px">Количество процессов, шт: 9</div>
<div class="abs sl" style="left:791.5px;top:271.2px">Средняя продолжительность, ч: 56.56</div>
<div class="abs sl" style="left:791.5px;top:285.2px">Среднее время простоев, ч: 19.00</div>
<div class="abs sl" style="left:791.5px;top:299.2px">Время простоев, ч: 171</div>
<div class="abs sl" style="left:791.5px;top:313.3px">Производительность, м3: 630</div>
<div class="abs sl" style="left:791.5px;top:327.3px">Потенциал производительности, шт: 3.02</div>
<div class="abs sl" style="left:791.5px;top:341.3px">Потенциал производительности, м3: 211.40</div>
<svg class="abs" style="left:0;top:0" width="1068" height="641"><defs><linearGradient id="gside" x1="0" x2="1" y1="0" y2="0"><stop offset="0" stop-color="#7e9130"/><stop offset="0.08" stop-color="#a2b444"/><stop offset="0.2" stop-color="#d3df7c"/><stop offset="0.32" stop-color="#b2c152"/><stop offset="0.45" stop-color="#c2cf68"/><stop offset="0.6" stop-color="#b4c356"/><stop offset="0.85" stop-color="#9fb140"/><stop offset="1" stop-color="#8b9e30"/></linearGradient><linearGradient id="blue" x1="0" x2="1" y1="0.3" y2="0"><stop offset="0" stop-color="#5eabf4"/><stop offset="1" stop-color="#9ad0fa"/></linearGradient><linearGradient id="olive" x1="0" x2="1" y1="0" y2="0"><stop offset="0" stop-color="#a9b94c"/><stop offset="0.6" stop-color="#a6b748"/><stop offset="1" stop-color="#96a938"/></linearGradient><linearGradient id="hole" x1="0" x2="1" y1="0" y2="0"><stop offset="0" stop-color="#5aa6f0"/><stop offset="0.49" stop-color="#c2e2fb"/><stop offset="0.5" stop-color="#e6f0a6"/><stop offset="1" stop-color="#a9ba50"/></linearGradient></defs><path d="M826.50 472.50 L826.50 494.00 A103.80 51.80 0 0 0 1034.10 494.00 L1034.10 472.50 A103.80 51.80 0 0 1 826.50 472.50 Z" fill="url(#gside)"/><path d="M930.30 472.50 L930.30 420.70 A103.80 51.80 0 0 1 974.50 425.63 Z" fill="#d7e96c"/><path d="M930.30 472.50 L974.50 425.63 A103.80 51.80 0 1 1 826.50 472.50 Z" fill="url(#olive)"/><path d="M930.30 472.50 L826.50 472.50 A103.80 51.80 0 0 1 930.30 420.70 Z" fill="url(#blue)"/><path d="M826.50 472.50 A103.80 51.80 0 0 0 1034.10 472.50" fill="none" stroke="#d0dc80" stroke-width="0.8" opacity="0.45"/><ellipse cx="930.6" cy="472.8" rx="30.6" ry="15.3" fill="url(#hole)"/><ellipse cx="930.2" cy="484" rx="22.5" ry="5" fill="#fff"/><line x1="951.3" y1="422" x2="953.8" y2="416.2" stroke="#111" stroke-width="1.3"/><line x1="848.8" y1="432" x2="857.5" y2="436.2" stroke="#111" stroke-width="1.3"/><line x1="987" y1="516.2" x2="993" y2="520" stroke="#111" stroke-width="1.3"/><text x="956" y="412.5" class="pl" text-anchor="middle">6%</text><text x="838" y="430" class="pl" text-anchor="middle">25%</text><text x="1000" y="529.5" class="pl" text-anchor="middle">69%</text></svg>
<div id="app-bottom" class="abs"></div>
</body></html>
